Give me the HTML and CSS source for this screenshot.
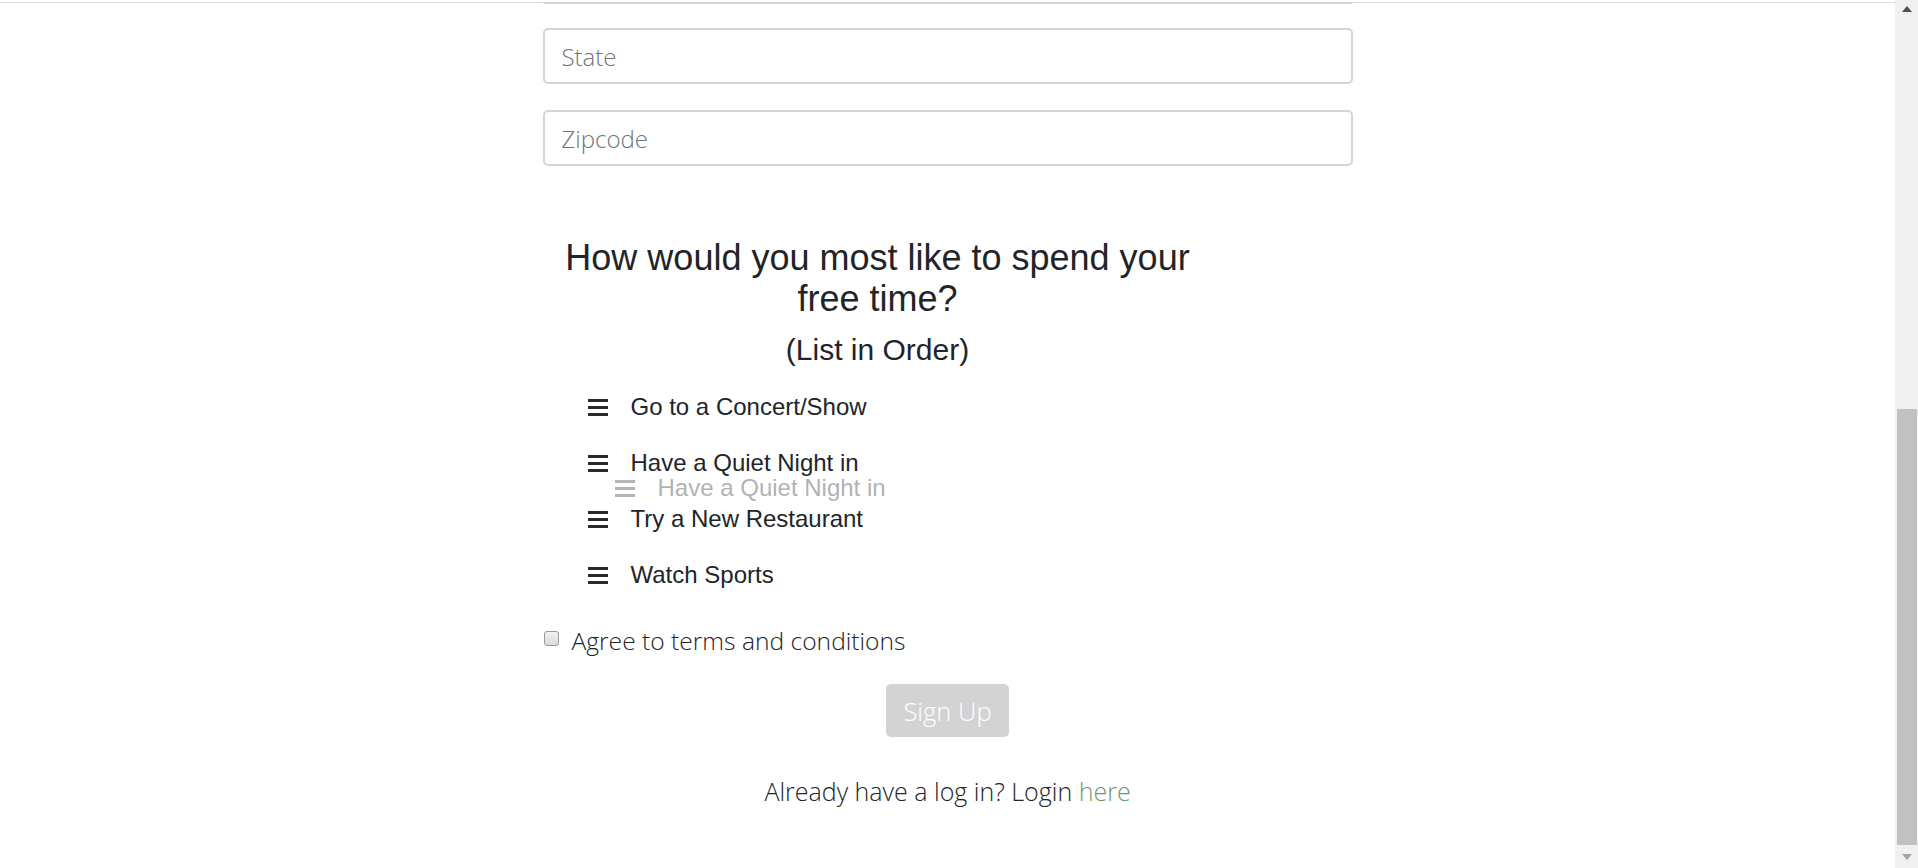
FILE: index.html
```html
<!DOCTYPE html>
<html lang="en">
<head>
<meta charset="utf-8">
<title>Sign Up</title>
<link rel="stylesheet" href="styles.css">
</head>
<body>
<div class="window">
  <main class="page">
    <div class="topline"></div>
    <form class="form">
      <div class="prev-input"></div>
      <input class="field" type="text" placeholder="State">
      <input class="field" type="text" placeholder="Zipcode">
      <section class="question">
        <h2 class="q-title">How would you most like to spend your free time?</h2>
        <h3 class="q-sub">(List in Order)</h3>
        <ul class="rank-list">
          <li class="rank-item"><svg class="grip" viewBox="0 0 20 17"><rect x="0" y="0" width="20" height="3"/><rect x="0" y="7" width="20" height="3"/><rect x="0" y="14" width="20" height="3"/></svg><span>Go to a Concert/Show</span></li>
          <li class="rank-item"><svg class="grip" viewBox="0 0 20 17"><rect x="0" y="0" width="20" height="3"/><rect x="0" y="7" width="20" height="3"/><rect x="0" y="14" width="20" height="3"/></svg><span>Have a Quiet Night in</span></li>
          <li class="rank-item"><svg class="grip" viewBox="0 0 20 17"><rect x="0" y="0" width="20" height="3"/><rect x="0" y="7" width="20" height="3"/><rect x="0" y="14" width="20" height="3"/></svg><span>Try a New Restaurant</span></li>
          <li class="rank-item"><svg class="grip" viewBox="0 0 20 17"><rect x="0" y="0" width="20" height="3"/><rect x="0" y="7" width="20" height="3"/><rect x="0" y="14" width="20" height="3"/></svg><span>Watch Sports</span></li>
          <li class="rank-item ghost"><svg class="grip" viewBox="0 0 20 17"><rect x="0" y="0" width="20" height="3"/><rect x="0" y="7" width="20" height="3"/><rect x="0" y="14" width="20" height="3"/></svg><span>Have a Quiet Night in</span></li>
        </ul>
      </section>
      <label class="agree"><span class="check"></span><span>Agree to terms and conditions</span></label>
      <div class="actions"><button type="button" class="btn-signup">Sign Up</button></div>
      <p class="login">Already have a log in? Login <a class="login-link" href="#">here</a></p>
    </form>
  </main>
  <div class="scrollbar">
    <div class="sb-btn"><svg viewBox="0 0 10 6" class="sb-arrow up"><polygon points="0,6 5,0 10,6"/></svg></div>
    <div class="sb-track"><div class="sb-thumb"></div></div>
    <div class="sb-btn"><svg viewBox="0 0 10 6" class="sb-arrow down"><polygon points="0,0 10,0 5,6"/></svg></div>
  </div>
</div>
</body>
</html>
```
FILE: styles.css
```css
html, body {
  margin: 0;
  padding: 0;
  height: 868px;
  overflow: hidden;
  background: #fff;
}

.window {
  display: flex;
  height: 868px;
}

.page {
  flex: 1;
  min-width: 0;
}

.topline {
  margin-top: 2px;
  height: 1px;
  background: #dedede;
}

.form {
  width: 810px;
  margin: 0 auto;
  display: flex;
  flex-direction: column;
}

.prev-input {
  height: 0;
  border-bottom: 2px solid #d0d4d9;
  border-radius: 0 0 5px 5px;
  margin-top: -1px;
}

.field {
  box-sizing: border-box;
  width: 100%;
  height: 56px;
  border: 2px solid #d2d6db;
  border-radius: 5px;
  padding: 0 17px;
  margin: 24px 0 0;
  font-family: "Open Sans", sans-serif;
  font-weight: 300;
  font-size: 24px;
  color: #495057;
  background: #fff;
  outline: none;
}

.field + .field {
  margin-top: 26px;
}

.field::placeholder {
  color: #6c757d;
}

.question {
  width: 650px;
  padding: 0 10px;
  margin-top: 71px;
}

.q-title {
  margin: 0;
  font-family: "Liberation Sans", Arial, sans-serif;
  font-weight: 400;
  font-size: 36px;
  line-height: 41px;
  color: #212529;
  text-align: center;
}

.q-sub {
  margin: 14px 0 0;
  font-family: "Liberation Sans", Arial, sans-serif;
  font-weight: 400;
  font-size: 30px;
  line-height: 34px;
  color: #212529;
  text-align: center;
}

.rank-list {
  list-style: none;
  margin: 12px 0 0;
  padding: 0 0 0 35px;
  position: relative;
}

.rank-item {
  display: flex;
  align-items: center;
  height: 56px;
  font-family: "Liberation Sans", Arial, sans-serif;
  font-size: 24px;
  color: #212529;
}

.grip {
  width: 20px;
  height: 17px;
  margin-right: 23px;
  fill: #2a2a2a;
  flex: none;
}

.rank-item.ghost {
  position: absolute;
  top: 81px;
  left: 62px;
  opacity: 0.35;
}

.agree {
  display: flex;
  align-items: center;
  margin-top: 22px;
  height: 30px;
  font-family: "Open Sans", sans-serif;
  font-weight: 300;
  font-size: 24.6px;
  color: #212529;
}

.check {
  box-sizing: border-box;
  width: 15px;
  height: 15px;
  margin: 0 13px 3px 1px;
  border: 1px solid #999;
  border-radius: 3px;
  background: linear-gradient(#f2f2f2, #d9d9d9);
  flex: none;
}

.actions {
  display: flex;
  justify-content: center;
  margin-top: 29px;
}

.btn-signup {
  width: 123px;
  height: 53px;
  border: none;
  border-radius: 5px;
  background: #d3d3d3;
  color: #fff;
  font-family: "Open Sans", sans-serif;
  font-weight: 300;
  font-size: 25.5px;
  padding: 0;
}

.login {
  margin: 39px 0 0;
  text-align: center;
  line-height: 30px;
  font-family: "Open Sans", sans-serif;
  font-weight: 300;
  font-size: 25px;
  color: #212529;
}

.login-link {
  color: #6e986e;
  text-decoration: none;
}

.scrollbar {
  width: 23px;
  flex: none;
  background: #f0f0f0;
  display: flex;
  flex-direction: column;
}

.sb-btn {
  height: 23px;
  display: flex;
  align-items: center;
  justify-content: center;
  flex: none;
}

.sb-arrow {
  width: 10px;
  height: 6px;
}

.sb-arrow.up {
  fill: #505050;
  margin-top: -6px;
}

.sb-arrow.down {
  fill: #a3a3a3;
  margin-top: 0;
}

.sb-track {
  flex: 1;
  display: flex;
  flex-direction: column;
  justify-content: flex-end;
}

.sb-thumb {
  height: 436px;
  margin: 0 1px 0 2px;
  background: #c1c1c1;
}
```
